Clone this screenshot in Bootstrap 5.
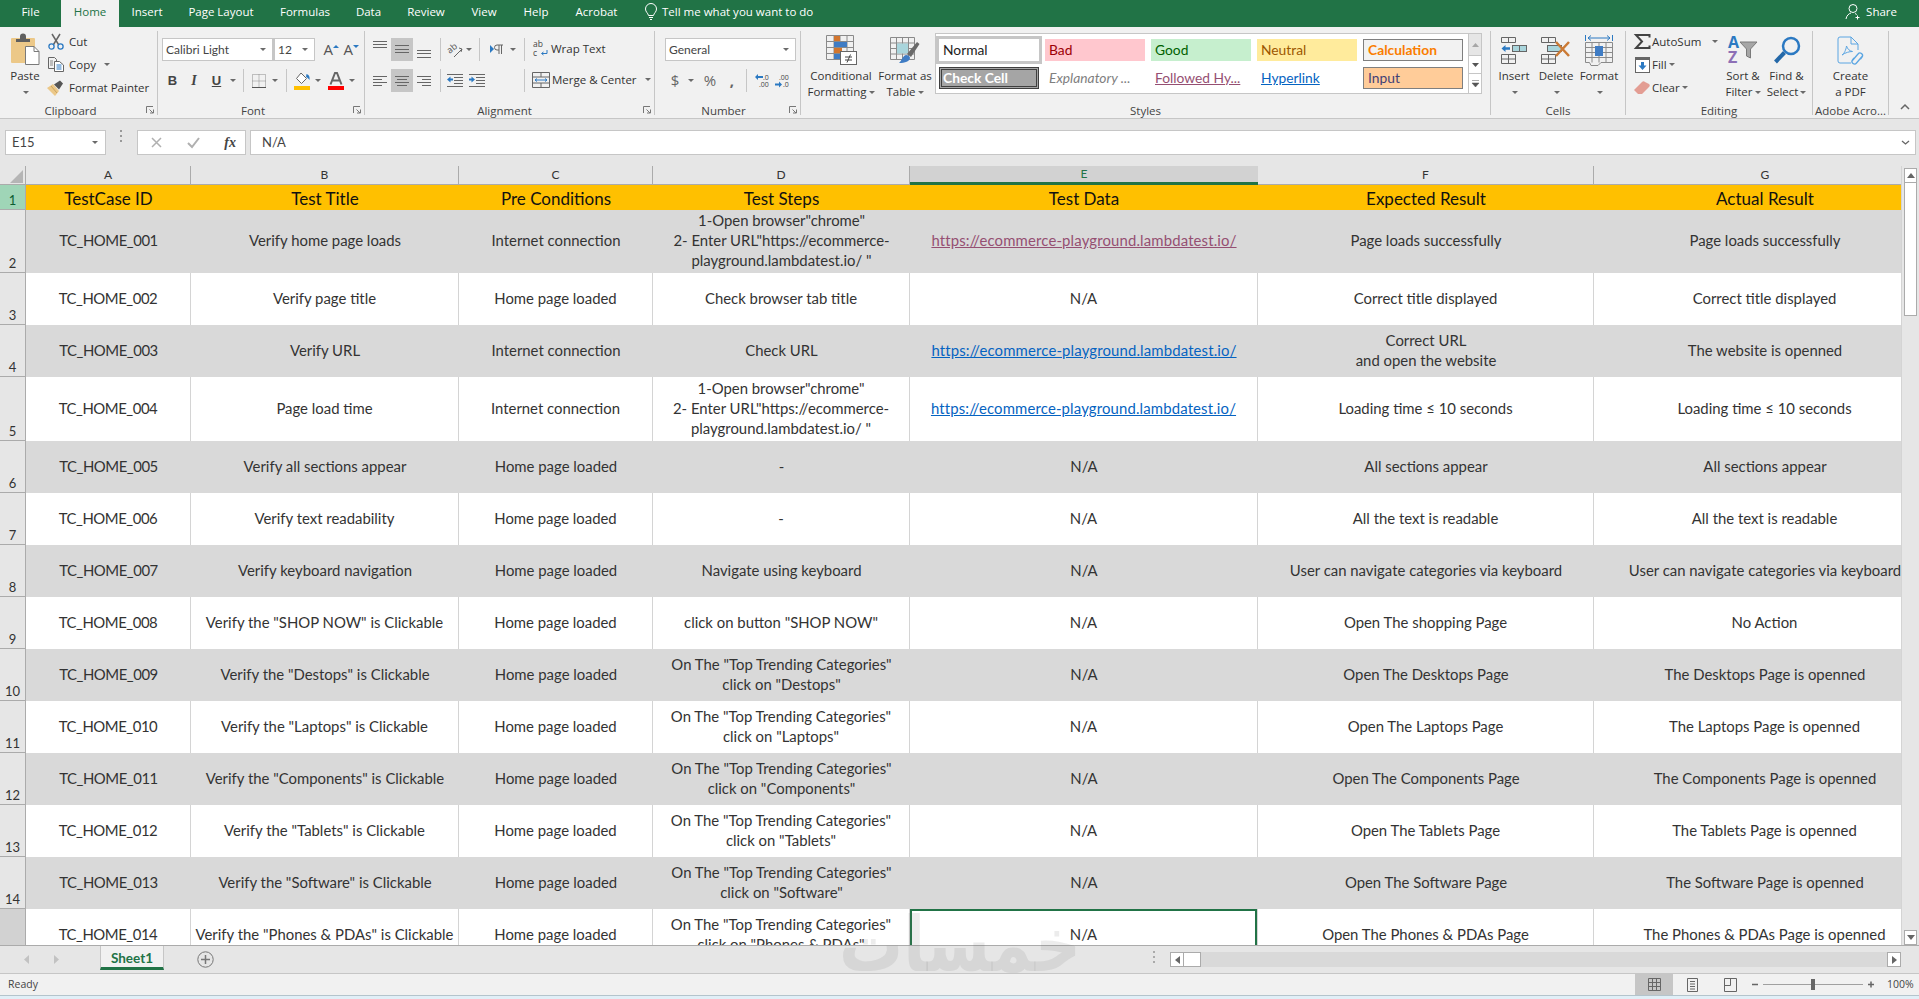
<!DOCTYPE html>
<html lang="en">
<head>
<meta charset="utf-8">
<title>Sheet1 - Excel</title>
<link href="https://cdn.jsdelivr.net/npm/bootstrap@5.3.0/dist/css/bootstrap.min.css" rel="stylesheet">
<style>
html,body{height:999px;overflow:hidden;}
body{font-family:"Open Sans","Liberation Sans",sans-serif;font-size:11.5px;color:#444;background:#f1f1f1;position:relative;}
svg{display:block;flex:none;overflow:visible;}
.xl-tabs{height:27px;background:#217346;color:#fff;font-size:11.5px;}
.xl-tab{height:27px;line-height:24px;text-align:center;flex:none;}
.xl-tab.on{background:#f1f1f1;color:#217346;}
.t-file{width:61px}.t-home{width:58px}.t-ins{width:56px}.t-page{width:92px}.t-form{width:76px}.t-data{width:51px}.t-rev{width:64px}.t-view{width:52px}.t-help{width:52px}.t-acro{width:69px}
.xl-tell{margin-left:13px;padding-bottom:4px;}
.xl-share{margin-left:auto;padding-right:22px;padding-bottom:4px;}
.xl-ribbon{height:92px;background:#f1f1f1;border-bottom:1px solid #c6c6c6;line-height:1;}
.rgp{flex:none;height:84px;margin-top:4px;border-right:1px solid #c6c6c6;display:flex;flex-direction:column;}
.rgb{height:72px;display:flex;}
.rgl{height:12px;line-height:16px;text-align:center;position:relative;white-space:nowrap;color:#444;}
.launch{position:absolute;right:3px;top:3px;}
.g-clip{width:158px}.g-font{width:207px}.g-align{width:290px}.g-num{width:146px}.g-style{width:690px}.g-cells{width:135px}.g-edit{width:187px}.g-acro{width:76px}
.g-clip .rgl,.g-font .rgl{padding-right:16px;}
.g-align .rgl{padding-right:10px;}
.g-num .rgl{padding-right:8px;}
.bigb{flex:none;display:flex;flex-direction:column;align-items:center;padding-top:4px;line-height:16px;white-space:nowrap;color:#333;}
.bigi{height:30px;margin-bottom:3px;display:flex;align-items:center;}
.crt{display:inline-block;width:0;height:0;border-top:3px solid #6a6a6a;border-left:3px solid transparent;border-right:3px solid transparent;vertical-align:middle;margin-left:2px;}
.crt-wrap{height:16px;display:flex;align-items:center;justify-content:center;}
.crt.far{margin-left:11px;}
.srow{height:23px;padding-bottom:2px;display:flex;align-items:center;white-space:nowrap;color:#333;}
.cell-i{flex:none;height:23px;display:flex;align-items:center;justify-content:center;}
.cell-i.sel{background:#c6c6c6;}
.rs{flex:none;width:1px;height:23px;background:#c6c6c6;margin:0 5px;}
.drop{flex:none;height:23px;background:#fff;border:1px solid #c6c6c6;display:flex;align-items:center;justify-content:space-between;padding:0 6px 0 3px;font-size:12px;font-family:Lato,"Liberation Sans",sans-serif;color:#444;}
.drop+.drop{border-left-width:2px;}
.wd8{width:8px}.wd10{width:10px}.wd12{width:12px}.wd18{width:18px}.wd19{width:19px}.wd20{width:20px}.wd21{width:21px}.wd22{width:22px}.wd23{width:23px}.wd24{width:24px}.wd26{width:26px}.wd29{width:29px}.wd42{width:42px}.wd44{width:44px}.wd111{width:111px}.wd131{width:131px}
.wd-cf{width:70px}.wd-ft{width:58px;margin-right:1px}.wd-sum{width:87px;flex:none}.wd-sort{width:48px}.wd-find{width:39px}
.p7{padding-top:7px;}
.row2{margin-top:8px;}
.pl4{padding-left:4px}.pl5{padding-left:5px}.pl10{padding-left:10px}.pl2{padding-left:2px}.pl6{padding-left:6px}.pl8{padding-left:8px}
.txt-b{font-family:"Liberation Sans",sans-serif;font-weight:700;font-size:13px;color:#444;}
.txt-i{font-family:"Liberation Serif",serif;font-style:italic;font-weight:700;font-size:14px;color:#444;}
.txt-u{text-decoration:underline;}
.txt-n{font-size:15px;color:#666;}
.gl-a{font-size:15px;font-family:"Open Sans",sans-serif;color:#555;position:relative;}
.gal{flex:none;width:533px;height:61px;margin-top:2px;background:#fff;border:1px solid #c6c6c6;border-right:0;padding:5px 0 0 3px;display:grid;grid-template-columns:repeat(5,100px);grid-auto-rows:22px;column-gap:6px;row-gap:6px;}
.gal-sb{flex:none;width:14px;height:61px;margin-top:2px;border:1px solid #c6c6c6;display:flex;flex-direction:column;background:#fff;}
.gal-sb div{display:flex;align-items:center;justify-content:center;}
.gal-sb .s1{height:21px;background:#e6e6e6;}
.gal-sb .s2{height:19px;border-top:1px solid #c6c6c6;border-bottom:1px solid #c6c6c6;}
.gal-sb .s3{flex:1;}
.sty{font-family:Lato,"Liberation Sans",sans-serif;font-size:13.8px;line-height:20px;padding-left:4px;white-space:nowrap;overflow:hidden;}
.s-norm{color:#222;outline:3px solid #c6c6c6;line-height:22px;}
.s-bad{background:#ffc7ce;color:#9c0006;line-height:22px;}
.s-good{background:#c6efce;color:#006100;line-height:22px;}
.s-neut{background:#ffeb9c;color:#9c5700;line-height:22px;}
.s-calc{background:#f2f2f2;color:#fa7d00;font-weight:700;border:1px solid #7f7f7f;}
.s-chk{background:#a5a5a5;color:#fff;font-weight:700;border:3px double #3f3f3f;line-height:16px;padding-left:1px;}
.s-exp{color:#7f7f7f;font-style:italic;line-height:22px;}
.s-fol{color:#954f72;line-height:22px;}.s-fol span,.s-lnk span{text-decoration:underline;}
.s-lnk{color:#0563c1;line-height:22px;}
.s-inp{background:#fc9;color:#3f3f76;border:1px solid #7f7f7f;}
.xl-coll{padding:0 9px 8px 0;}
.xl-fbar{height:47px;background:#e6e6e6;padding-top:11px;}
.fb-box{height:25px;background:#fff;border:1px solid #c6c6c6;flex:none;display:flex;align-items:center;font-family:Lato,sans-serif;font-size:13px;color:#444;}
.fb-name{width:101px;margin-left:5px;justify-content:space-between;padding:0 7px 0 6px;}
.fb-dots{width:31px;flex:none;display:flex;justify-content:center;}
.fb-fx{width:109px;justify-content:space-between;padding:0 9px 0 13px;}
.fb-main{width:1666px;margin-left:4px;justify-content:space-between;padding:0 5px 0 11px;}
.xl-sheet{height:779px;background:#fff;}
.xl-pane{width:1901px;flex:none;overflow:hidden;height:779px;}
.xl-vbar{width:18px;flex:none;background:#e6e6e6;padding:2px 2px 0;display:flex;flex-direction:column;border-left:1px solid #d4d4d4;}
.vb-btn{height:15px;background:#fff;border:1px solid #ababab;display:flex;align-items:center;justify-content:center;flex:none;}
.vb-thumb{height:133px;background:#fff;border:1px solid #ababab;border-top:0;flex:none;}
.vb-sp{flex:1;}
.table.xlt{table-layout:fixed;width:1936px;margin:0;--bs-table-bg:transparent;--bs-table-color:#333;font-family:Lato,"Liberation Sans",sans-serif;font-size:14.9px;line-height:20px;border-collapse:separate;border-spacing:0;}
.table.xlt>:not(caption)>*>*{padding:0;border:0;box-shadow:none;vertical-align:middle;text-align:center;white-space:nowrap;overflow:hidden;font-weight:400;}
.table.xlt>thead>tr>th{height:19px;background:#e6e6e6;font-size:12px;line-height:18px;border-right:1px solid #ababab;border-bottom:1px solid #ababab;color:#333;}
.table.xlt>thead>tr>th.hsel{background:#d2d2d2;color:#217346;border-bottom:3px solid #217346;border-right:0;line-height:16px;}
.table.xlt>thead>tr>th.hlast{border-right:0;}
.table.xlt>tbody>tr>th{background:#e6e6e6;border-right:1px solid #ababab;border-bottom:1px solid #ababab;vertical-align:bottom;font-size:13px;line-height:17px;color:#333;}
.table.xlt>tbody>tr>th.rsel{background:#9fd5b7;color:#0b5e31;}
.table.xlt>tbody>tr>th.rcur{background:#d2d2d2;}
.table.xlt>tbody>tr>td{color:#333;padding-bottom:3px;}
.table.xlt>tbody>tr>td:first-of-type{letter-spacing:-.45px;}
.table.xlt>tbody>tr.r-w>td{background:#fff;border-right:1px solid #d4d4d4;}
.table.xlt>tbody>tr.r-g>td{background:#d9d9d9;}
.table.xlt>tbody>tr.r-h>td{background:#ffc000;font-size:17px;color:#111;line-height:23px;letter-spacing:0;padding:2px 0 0;}
.table.xlt>tbody>tr>td.csel{box-shadow:inset 0 0 0 2px #217346;}
.cw0{width:26px}.cwa{width:165px}.cwb{width:268px}.cwc{width:194px}.cwd{width:257px}.cwe{width:348px}.cwf{width:336px}.cwg{width:342px}
.h25{height:25px}.h63{height:63px}.h52{height:52px}.h64{height:64px}
.xlk,.xlv{text-decoration:underline;letter-spacing:.15px;}
.xlk{color:#0563c1;}
.xlv{color:#954f72;}
.xl-tabsbar{height:28px;background:#e6e6e6;border-top:1px solid #ababab;}
.sh-nav{width:100px;flex:none;display:flex;padding-left:24px;gap:23px;align-items:center;}
.sh-tab{width:64px;height:24px;background:#f1f1f1;border-bottom:3px solid #217346;color:#217346;font-weight:700;font-family:Lato,sans-serif;font-size:13.5px;text-align:center;line-height:24px;flex:none;border-left:1px solid #c6c6c6;border-right:1px solid #c6c6c6;}
.sh-add{margin-left:33px;margin-top:5px;}
.sh-dots{margin-left:939px;margin-top:5px;}
.hb{margin-left:15px;margin-top:6px;height:15px;width:731px;background:#d9d9d9;display:flex;flex:none;}
.hb-b{width:14px;background:#fff;border:1px solid #ababab;display:flex;align-items:center;justify-content:center;flex:none;}
.hb-t{width:17px;background:#fff;border:1px solid #ababab;border-left:0;flex:none;}
.xl-status{height:22px;background:#f1f1f1;border-top:1px solid #c6c6c6;font-size:10.5px;color:#444;}
.st-ready{padding-left:8px;line-height:21px;}
.st-right{margin-left:auto;display:flex;align-items:center;height:21px;}
.st-v{width:38px;height:21px;display:flex;align-items:center;justify-content:center;flex:none;}
.st-v.on{background:#c6c6c6;}
.st-zoom{width:127px;margin-left:3px;flex:none;}
.st-pct{width:40px;padding-left:8px;flex:none;}
.xl-foot{height:4px;background:#e1eff7;border-top:1px solid #b4c4cc;}
.wmark{position:absolute;left:839px;top:900px;font-family:"DejaVu Sans",sans-serif;font-weight:700;font-size:76px;line-height:90px;color:rgba(110,110,110,.13);pointer-events:none;white-space:nowrap;transform:scaleX(.84);transform-origin:left center;}
</style>
</head>
<body>

<!-- title / tab strip -->
<div class="xl-tabs d-flex">
  <div class="xl-tab t-file">File</div>
  <div class="xl-tab t-home on">Home</div>
  <div class="xl-tab t-ins">Insert</div>
  <div class="xl-tab t-page">Page Layout</div>
  <div class="xl-tab t-form">Formulas</div>
  <div class="xl-tab t-data">Data</div>
  <div class="xl-tab t-rev">Review</div>
  <div class="xl-tab t-view">View</div>
  <div class="xl-tab t-help">Help</div>
  <div class="xl-tab t-acro">Acrobat</div>
  <div class="xl-tab d-flex align-items-center xl-tell">
    <svg width="14" height="18" viewBox="0 0 14 18" fill="none" stroke="#fff" stroke-width="1"><path d="M4.5 12.5C4 10 1.5 9 1.5 6a5.5 5.5 0 0 1 11 0c0 3-2.500 4-3 6.500zM5 14.500h4M6 16.500h2"/></svg>
    <span class="ms-1">Tell me what you want to do</span>
  </div>
  <div class="xl-tab d-flex align-items-center xl-share">
    <svg width="17" height="17" viewBox="0 0 17 17" fill="none" stroke="#fff" stroke-width="1"><circle cx="8" cy="5.500" r="4"/><path d="M1 16c.5-3.500 3-5.500 5-6M10 10.500c.7.300 1.300.6 1.800 1M12.500 12.500v4M10.500 14.500h4"/></svg>
    <span class="ms-1">Share</span>
  </div>
</div>

<!-- ribbon -->
<div class="xl-ribbon d-flex">

  <!-- Clipboard -->
  <div class="rgp g-clip">
    <div class="rgb">
      <div class="bigb wd42 pl8">
        <div class="bigi">
          <svg width="29" height="30" viewBox="0 0 29 30"><rect x="0" y="3" width="24" height="25" rx="1" fill="#ecc888"/><path d="M5 7V4h4V1.500a3 3 0 0 1 6 0V4h4v3z" fill="#5f5f5f"/><path d="M14.500 11.500H23l5 5v13H14.500z" fill="#fff" stroke="#7a7a7a"/><path d="M23 11.500v5h5" fill="none" stroke="#7a7a7a"/></svg>
        </div>
        <span>Paste</span>
        <div class="crt-wrap"><span class="crt"></span></div>
      </div>
      <div class="ps-1">
        <div class="srow"><div class="cell-i wd19"><svg width="16" height="17" viewBox="0 0 16 17" fill="none"><path d="M4 1l6.500 10.500M12 1L5.500 11.500" stroke="#666" stroke-width="1.500"/><circle cx="3.500" cy="13.500" r="2.600" stroke="#2b79c2" stroke-width="1.300"/><circle cx="12.500" cy="13.500" r="2.600" stroke="#2b79c2" stroke-width="1.300"/></svg></div><span class="ps-1">Cut</span></div>
        <div class="srow"><div class="cell-i wd19"><svg width="16" height="15" viewBox="0 0 16 15" fill="none"><path d="M6 11.500H.5v-11h6l2 2V5" stroke="#666"/><path d="M6.500 4.500h5l4 3.500v6.500h-9z" fill="#fff" stroke="#666"/><path d="M8.500 8h5M8.500 10h5M8.500 12h5" stroke="#2b79c2"/><path d="M2 4h3M2 6h3M2 8h3" stroke="#888"/></svg></div><span class="ps-1">Copy</span><span class="crt ms-2"></span></div>
        <div class="srow"><div class="cell-i wd19"><svg width="17" height="16" viewBox="0 0 17 16"><path d="M0 8l6-4 6 7-4 5z" fill="#ecc888"/><path d="M4 6l6 7" stroke="#c9a35f"/><path d="M7 4.500l6-4 3 3-4 6z" fill="#555"/></svg></div><span class="ps-1">Format Painter</span></div>
      </div>
    </div>
    <div class="rgl">Clipboard<svg class="launch" width="8" height="8" viewBox="0 0 8 8" fill="none" stroke="#777"><path d="M.5 7V.5H7M3.500 3.500l3.500 3.500M4 7h3.500V3.500"/></svg></div>
  </div>

  <!-- Font -->
  <div class="rgp g-font">
    <div class="rgb flex-column p7 pl4">
      <div class="d-flex">
        <div class="drop wd111"><span>Calibri Light</span><span class="crt"></span></div>
        <div class="drop wd42"><span>12</span><span class="crt"></span></div>
        <div class="cell-i wd24 justify-content-end"><span class="gl-a">A</span><svg width="6" height="12" viewBox="0 0 6 12"><path d="M0 4l3-3 3 3z" fill="#2b79c2"/></svg></div>
        <div class="cell-i wd20 justify-content-end"><span class="gl-a">A</span><svg width="6" height="12" viewBox="0 0 6 12"><path d="M0 1h6L3 4z" fill="#2b79c2"/></svg></div>
      </div>
      <div class="d-flex row2 align-items-center">
        <div class="cell-i wd21"><span class="txt-b">B</span></div>
        <div class="cell-i wd22"><span class="txt-i">I</span></div>
        <div class="cell-i wd23"><span class="txt-b txt-u">U</span></div>
        <div class="cell-i wd10"><span class="crt m-0"></span></div>
        <div class="rs"></div>
        <div class="cell-i wd20"><svg width="14" height="14" viewBox="0 0 14 14" fill="none" stroke="#8a8a8a" stroke-dasharray="1 1"><path d="M.5.500h13v13H.5zM7 .5v13M.5 7h13"/><path d="M0 13.500h14" stroke="#555" stroke-dasharray="none"/></svg></div>
        <div class="cell-i wd12"><span class="crt m-0"></span></div>
        <div class="rs"></div>
        <div class="cell-i wd20"><svg width="17" height="18" viewBox="0 0 17 18"><path d="M7 1l5.500 5.500L7.500 11.500 2.500 6.500z" fill="#fff" stroke="#666"/><path d="M12.500 2c2.500.5 3.500 3 3 6-1-1.500-2-2.500-3.500-3z" fill="#2b79c2"/><rect y="14" width="16" height="4" fill="#ffc000"/></svg></div>
        <div class="cell-i wd12"><span class="crt m-0"></span></div>
        <div class="cell-i wd24"><svg width="16" height="18" viewBox="0 0 16 18"><path d="M2.500 12.500L7 1h2l4.500 11.500M4.500 8.500h7" fill="none" stroke="#666" stroke-width="2"/><rect y="14" width="16" height="4" fill="#f00"/></svg></div>
        <div class="cell-i wd8"><span class="crt m-0"></span></div>
      </div>
    </div>
    <div class="rgl">Font<svg class="launch" width="8" height="8" viewBox="0 0 8 8" fill="none" stroke="#777"><path d="M.5 7V.5H7M3.500 3.500l3.500 3.500M4 7h3.500V3.500"/></svg></div>
  </div>

  <!-- Alignment -->
  <div class="rgp g-align">
    <div class="rgb flex-column p7 pl4">
      <div class="d-flex">
        <div class="cell-i wd22"><svg width="14" height="23" viewBox="0 0 14 23" stroke="#666"><path d="M0 3.500h14M0 6.500h14M0 9.500h14"/></svg></div>
        <div class="cell-i wd22 sel"><svg width="14" height="23" viewBox="0 0 14 23" stroke="#666"><path d="M0 7.500h14M0 11.500h14M0 14.500h14"/></svg></div>
        <div class="cell-i wd22"><svg width="14" height="23" viewBox="0 0 14 23" stroke="#666"><path d="M0 12.500h14M0 15.500h14M0 19.500h14"/></svg></div>
        <div class="rs"></div>
        <div class="cell-i wd18"><svg width="16" height="16" viewBox="0 0 16 16" fill="none"><text x="1" y="9" font-size="9" font-family="Open Sans" fill="#555" transform="rotate(-40 6 8)">ab</text><path d="M7 15l8-8" stroke="#666"/><path d="M12 6l3 1-1 3" stroke="#666"/></svg></div>
        <div class="cell-i wd10"><span class="crt m-0"></span></div>
        <div class="rs"></div>
        <div class="cell-i wd22"><svg width="13" height="11" viewBox="0 0 13 11"><path d="M0 1l4 4-4 4z" fill="#2b79c2"/><path d="M7 1h6M9 1v9M11.500 1v9M7 1a2.500 2.500 0 0 0 0 5h2" fill="none" stroke="#666"/></svg></div>
        <div class="cell-i wd12"><span class="crt m-0"></span></div>
        <div class="rs"></div>
        <div class="srow"><div class="cell-i wd21"><svg width="15" height="17" viewBox="0 0 15 17"><text x="0" y="7" font-size="8.500" font-family="Open Sans" fill="#444">ab</text><text x="0" y="16" font-size="8.500" font-family="Open Sans" fill="#444">c</text><path d="M14 10v3.500H9M10.500 12l-2 1.500 2 1.500" fill="none" stroke="#2b79c2"/></svg></div><span>Wrap Text</span></div>
      </div>
      <div class="d-flex row2 align-items-center">
        <div class="cell-i wd22"><svg width="14" height="10" viewBox="0 0 14 10" stroke="#666"><path d="M0 .5h14M0 3.500h9M0 6.500h14M0 9.500h9"/></svg></div>
        <div class="cell-i wd22 sel"><svg width="14" height="10" viewBox="0 0 14 10" stroke="#666"><path d="M0 .5h14M2 3.500h10M0 6.500h14M2 9.500h10"/></svg></div>
        <div class="cell-i wd22"><svg width="14" height="10" viewBox="0 0 14 10" stroke="#666"><path d="M0 .5h14M5 3.500h9M0 6.500h14M5 9.500h9"/></svg></div>
        <div class="rs"></div>
        <div class="cell-i wd18"><svg width="16" height="13" viewBox="0 0 16 13"><path d="M0 .5h16M7 3.500h9M7 6.500h9M7 9.500h9M0 12.500h16" stroke="#666"/><path d="M0 5.500l3.500-3v2H6v2H3.500v2z" fill="#2b79c2"/></svg></div>
        <div class="cell-i wd26"><svg width="16" height="13" viewBox="0 0 16 13"><path d="M0 .5h16M7 3.500h9M7 6.500h9M7 9.500h9M0 12.500h16" stroke="#666"/><path d="M6 5.500l-3.500-3v2H0v2h2.500v2z" fill="#2b79c2"/></svg></div>
        <div class="wd29"></div>
        <div class="rs"></div>
        <div class="srow"><div class="cell-i wd22"><svg width="18" height="16" viewBox="0 0 18 16" fill="none"><path d="M.5.500h17v15H.5zM.5 5h17M.5 11h17M9 .5V5M9 11v4.500" stroke="#666"/><path d="M3 8h12M3 8l2-1.500M3 8l2 1.500M15 8l-2-1.500M15 8l-2 1.500" stroke="#2b79c2"/></svg></div><span>Merge &amp; Center</span><span class="crt ms-2"></span></div>
      </div>
    </div>
    <div class="rgl">Alignment<svg class="launch" width="8" height="8" viewBox="0 0 8 8" fill="none" stroke="#777"><path d="M.5 7V.5H7M3.500 3.500l3.500 3.500M4 7h3.500V3.500"/></svg></div>
  </div>

  <!-- Number -->
  <div class="rgp g-num">
    <div class="rgb flex-column p7 pl10">
      <div class="d-flex"><div class="drop wd131"><span>General</span><span class="crt"></span></div></div>
      <div class="d-flex row2 align-items-center">
        <div class="cell-i wd20 txt-n"><span>$</span></div>
        <div class="cell-i wd12"><span class="crt m-0"></span></div>
        <div class="cell-i wd26 txt-n"><span>%</span></div>
        <div class="cell-i wd18 fw-bold txt-n"><span>,</span></div>
        <div class="rs"></div>
        <div class="cell-i wd20"><svg width="15" height="15" viewBox="0 0 15 15"><path d="M0 4l3-3v2h5v2H3v2z" fill="#2b79c2"/><text x="8" y="6.500" font-size="7" font-family="Open Sans" fill="#444">.0</text><text x="4" y="14" font-size="7" font-family="Open Sans" fill="#444">.00</text></svg></div>
        <div class="cell-i wd20"><svg width="15" height="15" viewBox="0 0 15 15"><text x="4" y="6.500" font-size="7" font-family="Open Sans" fill="#444">.00</text><text x="8" y="14" font-size="7" font-family="Open Sans" fill="#444">.0</text><path d="M7 11.500l-3-3v2H0v2h4v2z" fill="#2b79c2"/></svg></div>
      </div>
    </div>
    <div class="rgl">Number<svg class="launch" width="8" height="8" viewBox="0 0 8 8" fill="none" stroke="#777"><path d="M.5 7V.5H7M3.500 3.500l3.500 3.500M4 7h3.500V3.500"/></svg></div>
  </div>

  <!-- Styles -->
  <div class="rgp g-style">
    <div class="rgb pl5">
      <div class="bigb wd-cf">
        <div class="bigi"><svg width="31" height="30" viewBox="0 0 31 30"><g fill="none" stroke="#8a8a8a"><path d="M.5.500h27v24H.5zM.5 6.500h27M.5 12.500h27M.5 18.500h27M8 .5v24M14 .5v24M21 .5v24"/></g><rect x="8" y="1" width="6" height="5" fill="#d2762e"/><rect x="8" y="7" width="13" height="5" fill="#3f7cc4"/><rect x="8" y="13" width="8" height="5" fill="#d2762e"/><rect x="8" y="19" width="6" height="5" fill="#3f7cc4"/><rect x="14.500" y="16.500" width="16" height="13" fill="#fff" stroke="#666"/><path d="M19 22h7M19 25h7M24.500 19.500l-3.500 8" stroke="#444" fill="none"/></svg></div>
        <span>Conditional</span><span>Formatting<span class="crt"></span></span>
      </div>
      <div class="bigb wd-ft">
        <div class="bigi"><svg width="30" height="30" viewBox="0 0 30 30"><g fill="none" stroke="#8a8a8a"><path d="M.5 2.500h24v22H.5zM.5 8h24M.5 13.500h24M.5 19h24M6.500 2.500v22M12.500 2.500v22M18.500 2.500v22"/></g><rect x="7" y="8.500" width="11" height="10" fill="#a9d5dc"/><path d="M27 7l2.500 2L21 22l-4-3z" fill="#6a6a6a"/><path d="M16 20c2 0 4 1 4 3 0 3-5 5-11 5 3-2 3-7 7-8z" fill="#3f7cc4"/></svg></div>
        <span>Format as</span><span>Table<span class="crt"></span></span>
      </div>
      <div class="gal">
        <div class="sty s-norm">Normal</div>
        <div class="sty s-bad">Bad</div>
        <div class="sty s-good">Good</div>
        <div class="sty s-neut">Neutral</div>
        <div class="sty s-calc">Calculation</div>
        <div class="sty s-chk">Check Cell</div>
        <div class="sty s-exp">Explanatory ...</div>
        <div class="sty s-fol"><span>Followed Hy...</span></div>
        <div class="sty s-lnk"><span>Hyperlink</span></div>
        <div class="sty s-inp">Input</div>
      </div>
      <div class="gal-sb">
        <div class="s1"><svg width="7" height="4" viewBox="0 0 7 4"><path d="M0 4l3.500-4L7 4z" fill="#a6a6a6"/></svg></div>
        <div class="s2"><svg width="7" height="4" viewBox="0 0 7 4"><path d="M0 0l3.500 4L7 0z" fill="#555"/></svg></div>
        <div class="s3"><svg width="7" height="7" viewBox="0 0 7 7"><path d="M0 .5h7M0 3l3.500 4L7 3z" fill="#555" stroke="#555" stroke-width=".5"/></svg></div>
      </div>
    </div>
    <div class="rgl">Styles</div>
  </div>

  <!-- Cells -->
  <div class="rgp g-cells">
    <div class="rgb pl2">
      <div class="bigb wd42">
        <div class="bigi"><svg width="26" height="27" viewBox="0 0 26 27" fill="none" stroke="#666"><path d="M.5.500h14v5H.5zM7.500.5v5M.5 17.500h14v9H.5zM7.500 17.500v9M.5 22h14"/><rect x="11.500" y="8.500" width="14" height="6" fill="#a9d5dc"/><path d="M18.500 8.500v6"/><path d="M.5 11.500l4-3.500v2.300H9v2.400H4.500V15z" fill="#2b79c2" stroke="none"/></svg></div>
        <span>Insert</span><div class="crt-wrap"><span class="crt"></span></div>
      </div>
      <div class="bigb wd42">
        <div class="bigi"><svg width="30" height="27" viewBox="0 0 30 27" fill="none" stroke="#666"><path d="M.5.500h14v5H.5zM7.500.5v5M.5 17.500h14v9H.5zM7.500 17.500v9M.5 22h14"/><rect x="6.500" y="8.500" width="14" height="6" fill="#a9d5dc"/><path d="M15 5l13 14M28 5L15 19" stroke="#cb7a35" stroke-width="2.500"/></svg></div>
        <span>Delete</span><div class="crt-wrap"><span class="crt"></span></div>
      </div>
      <div class="bigb wd44">
        <div class="bigi"><svg width="28" height="31" viewBox="0 0 28 31" fill="none"><path d="M3 3h22M3 3l3-2.500M3 3l3 2.500M25 3l-3-2.500M25 3l-3 2.500M.5 0v6M27.500 0v6" stroke="#2b79c2"/><path d="M.5 7.500h27v20H16l-3 3H6l-1.500-3H.5zM.5 12.500h27M.5 17.500h27M.5 22.500h27M7 7.500v20M14 7.500v20M21 7.500v20" stroke="#8a8a8a"/><rect x="10" y="11" width="8" height="10" fill="#3f7cc4"/></svg></div>
        <span>Format</span><div class="crt-wrap"><span class="crt"></span></div>
      </div>
    </div>
    <div class="rgl">Cells</div>
  </div>

  <!-- Editing -->
  <div class="rgp g-edit">
    <div class="rgb pl6">
      <div class="wd-sum">
        <div class="srow"><div class="cell-i wd20"><svg width="15" height="15" viewBox="0 0 15 15"><path d="M14.500 3.500V1H1l6 6.500L1 14h13.500v-2.500" fill="none" stroke="#444" stroke-width="2"/></svg></div><span>AutoSum</span><span class="crt far"></span></div>
        <div class="srow"><div class="cell-i wd20"><svg width="15" height="16" viewBox="0 0 15 16"><rect x=".5" y=".5" width="14" height="15" fill="#fff" stroke="#666"/><rect width="15" height="3" fill="#666"/><path d="M7.500 13l-4-4.500h2.500V5h3v3.500H11.500z" fill="#2b79c2"/></svg></div><span>Fill</span><span class="crt"></span></div>
        <div class="srow"><div class="cell-i wd20"><svg width="16" height="14" viewBox="0 0 16 14"><path d="M0 9l8-8c1-1 2-1 3 0l4 2c1 1 1 2 0 3l-7 7H4z" fill="#e39d93"/></svg></div><span>Clear</span><span class="crt"></span></div>
      </div>
      <div class="bigb wd-sort">
        <div class="bigi"><svg width="30" height="28" viewBox="0 0 30 28"><text x="0" y="12" font-size="16" font-weight="700" font-family="Open Sans" fill="#2b79c2">A</text><text x="0" y="27" font-size="16" font-weight="700" font-family="Open Sans" fill="#8d6fb5">Z</text><path d="M12 6h17l-6.500 7v9l-4-2v-7z" fill="#a6a6a6" stroke="#7a7a7a"/></svg></div>
        <span>Sort &amp;</span><span>Filter<span class="crt"></span></span>
      </div>
      <div class="bigb wd-find">
        <div class="bigi"><svg width="28" height="28" viewBox="0 0 28 28" fill="none" stroke="#2b79c2"><circle cx="18" cy="10" r="8" stroke-width="2.500"/><path d="M11.500 16.500L2.500 26" stroke-width="4" stroke="#2468a8"/></svg></div>
        <span>Find &amp;</span><span>Select<span class="crt"></span></span>
      </div>
    </div>
    <div class="rgl">Editing</div>
  </div>

  <!-- Adobe -->
  <div class="rgp g-acro">
    <div class="rgb justify-content-center">
      <div class="bigb">
        <div class="bigi"><svg width="27" height="29" viewBox="0 0 27 29" fill="none" stroke="#5aa5e2"><path d="M14 27H3a2 2 0 0 1-2-2V3a2 2 0 0 1 2-2h11l7 7v6"/><path d="M14 1v7h7"/><path d="M5 19c2-1 4-5 4.500-9 1 3 3 5 6 5.500-3 0-7 1-10.500 3.500z"/><path d="M15 25l6-7a2.500 2.500 0 0 1 4 3l-1.500 2M17 22l-1.500 2a2.500 2.500 0 0 0 4 3l6-7" stroke-width="1.300"/></svg></div>
        <span>Create</span><span>a PDF</span>
      </div>
    </div>
    <div class="rgl">Adobe Acro...</div>
  </div>

  <div class="flex-grow-1 d-flex justify-content-end align-items-end xl-coll"><svg width="10" height="6" viewBox="0 0 10 6" fill="none" stroke="#666" stroke-width="1.500"><path d="M1 5l4-4 4 4"/></svg></div>
</div>

<!-- formula bar -->
<div class="xl-fbar d-flex align-items-start">
  <div class="fb-box fb-name"><span>E15</span><span class="crt"></span></div>
  <div class="fb-dots"><svg width="3" height="13" viewBox="0 0 3 13" fill="#999"><rect y="0" width="2" height="2"/><rect y="5" width="2" height="2"/><rect y="10" width="2" height="2"/></svg></div>
  <div class="fb-box fb-fx">
    <svg width="11" height="11" viewBox="0 0 11 11" fill="none" stroke="#b0b0b0" stroke-width="1.500"><path d="M1 1l9 9M10 1l-9 9"/></svg>
    <svg width="13" height="11" viewBox="0 0 13 11" fill="none" stroke="#b0b0b0" stroke-width="2"><path d="M1 6l4 4 7-9"/></svg>
    <span class="txt-i">fx</span>
  </div>
  <div class="fb-box fb-main"><span>N/A</span><svg width="9" height="5" viewBox="0 0 9 5" fill="none" stroke="#666" stroke-width="1.300"><path d="M1 1l3.500 3L8 1"/></svg></div>
</div>

<!-- sheet -->
<div class="xl-sheet d-flex">
  <div class="xl-pane">
    <table class="table xlt">
      <colgroup>
        <col class="cw0"><col class="cwa"><col class="cwb"><col class="cwc"><col class="cwd"><col class="cwe"><col class="cwf"><col class="cwg">
      </colgroup>
      <thead>
        <tr>
          <th><svg class="ms-2" width="15" height="15" viewBox="0 0 15 15"><path d="M15 2v13H2z" fill="#b5b5b5"/></svg></th>
          <th>A</th><th>B</th><th>C</th><th>D</th><th class="hsel">E</th><th>F</th><th class="hlast">G</th>
        </tr>
      </thead>
      <tbody>
        <tr class="r-h h25"><th class="rsel">1</th><td>TestCase ID</td><td>Test Title</td><td>Pre Conditions</td><td>Test Steps</td><td>Test Data</td><td>Expected Result</td><td>Actual Result</td></tr>
        <tr class="r-g h63"><th>2</th><td>TC_HOME_001</td><td>Verify home page loads</td><td>Internet connection</td><td>1-Open browser"chrome"<br>2- Enter URL"https://ecommerce-<br>playground.lambdatest.io/ "</td><td><span class="xlv">https://ecommerce-playground.lambdatest.io/</span></td><td>Page loads successfully</td><td>Page loads successfully</td></tr>
        <tr class="r-w h52"><th>3</th><td>TC_HOME_002</td><td>Verify page title</td><td>Home page loaded</td><td>Check browser tab title</td><td>N/A</td><td>Correct title displayed</td><td>Correct title displayed</td></tr>
        <tr class="r-g h52"><th>4</th><td>TC_HOME_003</td><td>Verify URL</td><td>Internet connection</td><td>Check URL</td><td><span class="xlk">https://ecommerce-playground.lambdatest.io/</span></td><td>Correct URL<br>and open the website</td><td>The website is openned</td></tr>
        <tr class="r-w h64"><th>5</th><td>TC_HOME_004</td><td>Page load time</td><td>Internet connection</td><td>1-Open browser"chrome"<br>2- Enter URL"https://ecommerce-<br>playground.lambdatest.io/ "</td><td><span class="xlk">https://ecommerce-playground.lambdatest.io/</span></td><td>Loading time ≤ 10 seconds</td><td>Loading time ≤ 10 seconds</td></tr>
        <tr class="r-g h52"><th>6</th><td>TC_HOME_005</td><td>Verify all sections appear</td><td>Home page loaded</td><td>-</td><td>N/A</td><td>All sections appear</td><td>All sections appear</td></tr>
        <tr class="r-w h52"><th>7</th><td>TC_HOME_006</td><td>Verify text readability</td><td>Home page loaded</td><td>-</td><td>N/A</td><td>All the text is readable</td><td>All the text is readable</td></tr>
        <tr class="r-g h52"><th>8</th><td>TC_HOME_007</td><td>Verify keyboard navigation</td><td>Home page loaded</td><td>Navigate using keyboard</td><td>N/A</td><td>User can navigate categories via keyboard</td><td>User can navigate categories via keyboard</td></tr>
        <tr class="r-w h52"><th>9</th><td>TC_HOME_008</td><td>Verify the "SHOP NOW" is Clickable</td><td>Home page loaded</td><td>click on button "SHOP NOW"</td><td>N/A</td><td>Open The shopping Page</td><td>No Action</td></tr>
        <tr class="r-g h52"><th>10</th><td>TC_HOME_009</td><td>Verify the "Destops" is Clickable</td><td>Home page loaded</td><td>On The "Top Trending Categories"<br>click on "Destops"</td><td>N/A</td><td>Open The Desktops Page</td><td>The Desktops Page is openned</td></tr>
        <tr class="r-w h52"><th>11</th><td>TC_HOME_010</td><td>Verify the "Laptops" is Clickable</td><td>Home page loaded</td><td>On The "Top Trending Categories"<br>click on "Laptops"</td><td>N/A</td><td>Open The Laptops Page</td><td>The Laptops Page is openned</td></tr>
        <tr class="r-g h52"><th>12</th><td>TC_HOME_011</td><td>Verify the "Components" is Clickable</td><td>Home page loaded</td><td>On The "Top Trending Categories"<br>click on "Components"</td><td>N/A</td><td>Open The Components Page</td><td>The Components Page is openned</td></tr>
        <tr class="r-w h52"><th>13</th><td>TC_HOME_012</td><td>Verify the "Tablets" is Clickable</td><td>Home page loaded</td><td>On The "Top Trending Categories"<br>click on "Tablets"</td><td>N/A</td><td>Open The Tablets Page</td><td>The Tablets Page is openned</td></tr>
        <tr class="r-g h52"><th>14</th><td>TC_HOME_013</td><td>Verify the "Software" is Clickable</td><td>Home page loaded</td><td>On The "Top Trending Categories"<br>click on "Software"</td><td>N/A</td><td>Open The Software Page</td><td>The Software Page is openned</td></tr>
        <tr class="r-w h52"><th class="rcur">15</th><td>TC_HOME_014</td><td>Verify the "Phones &amp; PDAs" is Clickable</td><td>Home page loaded</td><td>On The "Top Trending Categories"<br>click on "Phones &amp; PDAs"</td><td class="csel">N/A</td><td>Open The Phones &amp; PDAs Page</td><td>The Phones &amp; PDAs Page is openned</td></tr>
      </tbody>
    </table>
  </div>
  <div class="xl-vbar">
    <div class="vb-btn"><svg width="8" height="5" viewBox="0 0 8 5"><path d="M0 5l4-5 4 5z" fill="#666"/></svg></div>
    <div class="vb-thumb"></div>
    <div class="vb-sp"></div>
    <div class="vb-btn"><svg width="8" height="5" viewBox="0 0 8 5"><path d="M0 0l4 5 4-5z" fill="#666"/></svg></div>
  </div>
</div>

<!-- sheet tabs -->
<div class="xl-tabsbar d-flex">
  <div class="sh-nav">
    <svg width="6" height="9" viewBox="0 0 6 9"><path d="M5 0L0 4.500 5 9z" fill="#c2c2c2"/></svg>
    <svg width="6" height="9" viewBox="0 0 6 9"><path d="M1 0l5 4.500L1 9z" fill="#c2c2c2"/></svg>
  </div>
  <div class="sh-tab">Sheet1</div>
  <div class="sh-add"><svg width="17" height="17" viewBox="0 0 17 17" fill="none" stroke="#777"><circle cx="8.500" cy="8.500" r="7.700"/><path d="M8.500 4v9M4 8.500h9" stroke-width="1.500"/></svg></div>
  <div class="sh-dots"><svg width="2" height="13" viewBox="0 0 2 13" fill="#aaa"><rect y="0" width="2" height="2"/><rect y="5" width="2" height="2"/><rect y="10" width="2" height="2"/></svg></div>
  <div class="hb">
    <div class="hb-b"><svg width="5" height="8" viewBox="0 0 5 8"><path d="M5 0L0 4l5 4z" fill="#666"/></svg></div>
    <div class="hb-t"></div>
    <div class="flex-grow-1"></div>
    <div class="hb-b"><svg width="5" height="8" viewBox="0 0 5 8"><path d="M0 0l5 4-5 4z" fill="#666"/></svg></div>
  </div>
</div>

<!-- status bar -->
<div class="xl-status d-flex">
  <div class="st-ready">Ready</div>
  <div class="st-right">
    <div class="st-v on"><svg width="13" height="13" viewBox="0 0 13 13" fill="none" stroke="#666"><path d="M.5.500h12v12H.5zM4.500.5v12M8.500.5v12M.5 4.500h12M.5 8.500h12"/></svg></div>
    <div class="st-v"><svg width="11" height="14" viewBox="0 0 11 14" fill="none" stroke="#666"><path d="M.5.500h10v13H.5zM3 3.500h5M3 6h5M3 8.500h5M3 11h5"/></svg></div>
    <div class="st-v"><svg width="13" height="14" viewBox="0 0 13 14" fill="none" stroke="#666"><path d="M.5.500h12v13H.5zM6.500.5v7M.5 7.500h6"/></svg></div>
    <div class="st-zoom"><svg width="127" height="21" viewBox="0 0 127 21"><path d="M0 10.500h6M116 10.500h6M119 7.500v6" stroke="#666" stroke-width="1.500"/><path d="M11 10.500h100" stroke="#a0a0a0"/><rect x="59" y="5" width="4" height="11" fill="#666"/></svg></div>
    <div class="st-pct">100%</div>
  </div>
</div>
<div class="xl-foot"></div>

<!-- watermark over the page -->
<div class="wmark">خمسات</div>

<script src="https://cdn.jsdelivr.net/npm/bootstrap@5.3.0/dist/js/bootstrap.bundle.min.js"></script>
</body>
</html>
